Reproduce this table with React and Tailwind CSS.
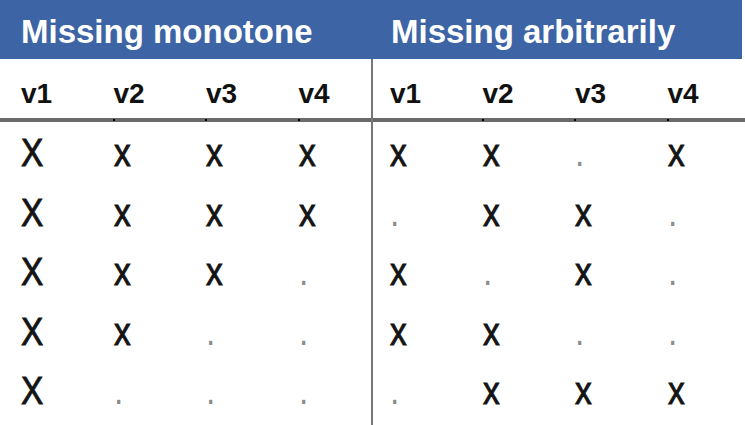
const monotone = [
  ["X", "x", "x", "x"],
  ["X", "x", "x", "x"],
  ["X", "x", "x", "."],
  ["X", "x", ".", "."],
  ["X", ".", ".", "."],
];

const arbitrary = [
  ["x", "x", ".", "x"],
  [".", "x", "x", "."],
  ["x", ".", "x", "."],
  ["x", "x", ".", "."],
  [".", "x", "x", "x"],
];

const labels = ["v1", "v2", "v3", "v4"];

function Cell({ value }) {
  const dot = value === ".";
  return (
    <div className="w-[92.5px] shrink-0 pt-[12px] text-[38px] leading-none">
      <span
        className={
          "inline-block origin-left scale-x-[0.88] " +
          (dot
            ? "text-[#8c8c8c]"
            : "text-[#141414] [-webkit-text-stroke:0.9px_#141414]")
        }
      >
        {value}
      </span>
    </div>
  );
}

function Half({ rows, className, pad }) {
  return (
    <div className={className}>
      {/* column labels */}
      <div className={"flex h-[63px] border-b-4 border-[#6a6a6a] " + pad}>
        {labels.map((l, i) => (
          <div
            key={l}
            className="relative w-[92.5px] shrink-0 pt-[21px] text-[28px] font-bold leading-none text-[#111]"
          >
            {l}
            {i < 3 && (
              <span className="absolute bottom-[-3px] right-[-1px] h-[2px] w-[2px] bg-black" />
            )}
          </div>
        ))}
      </div>
      {rows.map((row, r) => (
        <div key={r} className={"flex h-[59.5px] " + pad}>
          {row.map((v, c) => (
            <Cell key={c} value={v} />
          ))}
        </div>
      ))}
    </div>
  );
}

export default function App() {
  return (
    <div className="flex h-[425px] w-[745px] flex-col overflow-hidden bg-white font-['Liberation_Sans',Arial,sans-serif]">
      <div className="flex h-[59px] w-[742px] shrink-0 bg-[#3d64a5] text-[33px] font-bold leading-none text-white">
        <div className="w-[371px] pl-[21px] pt-[15px]">Missing monotone</div>
        <div className="pl-[20px] pt-[15px]">Missing arbitrarily</div>
      </div>
      <div className="flex flex-1">
        <Half rows={monotone} className="w-[371px]" pad="pl-[21px]" />
        <Half rows={arbitrary} className="flex-1 border-l-2 border-[#777]" pad="pl-[17px]" />
      </div>
    </div>
  );
}
